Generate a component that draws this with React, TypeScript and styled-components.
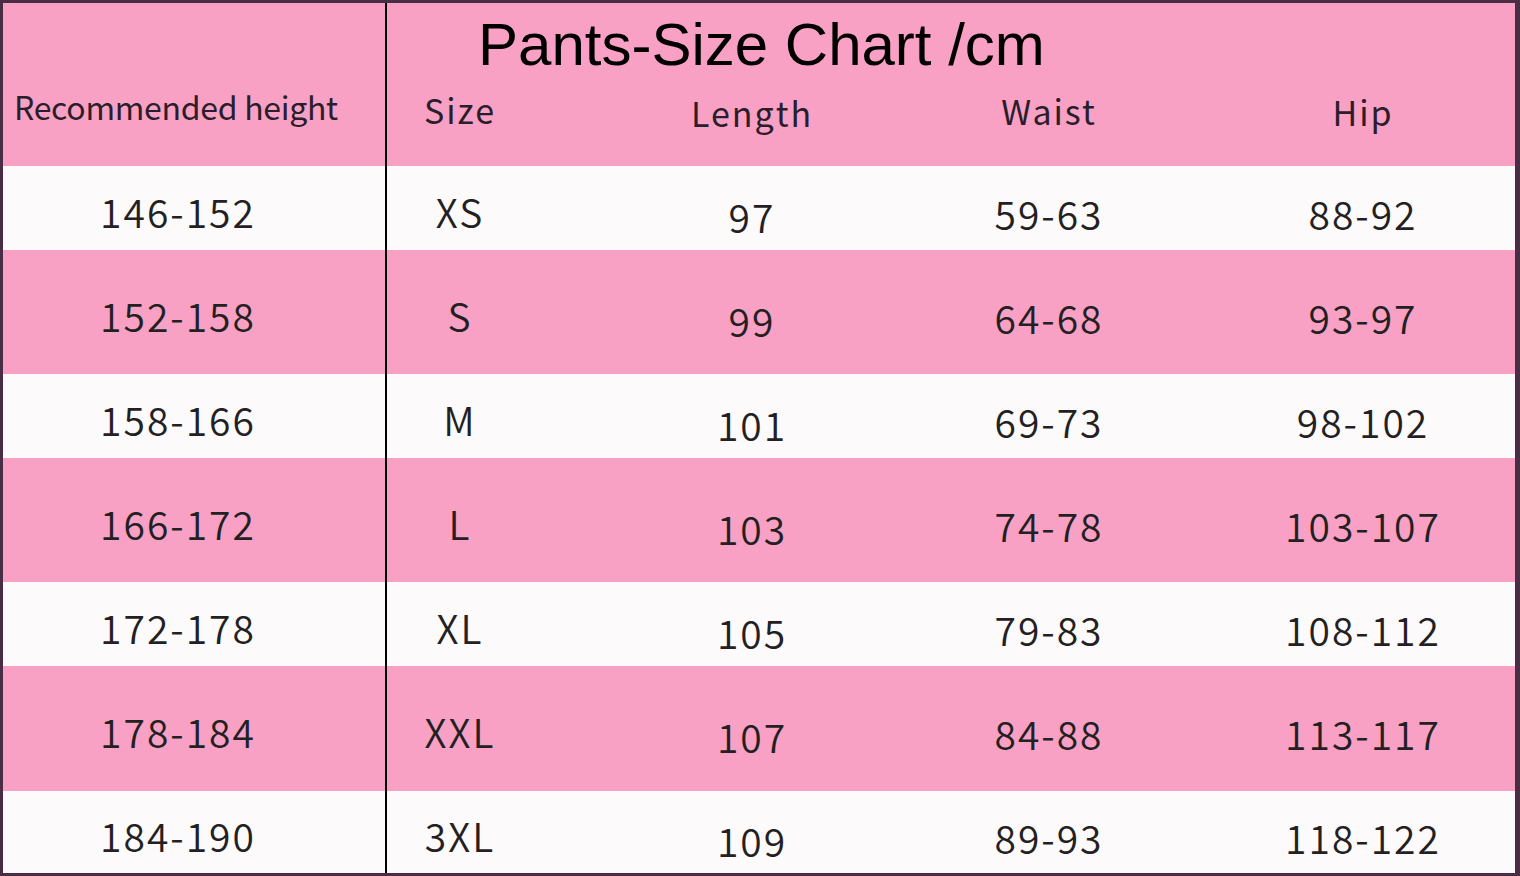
import React from "react";
import styled, { createGlobalStyle } from "styled-components";

const GlobalStyle = createGlobalStyle`
  html, body { margin: 0; padding: 0; background: #ffffff; }
  * { box-sizing: border-box; }
`;

const PINK = "#f8a1c5";
const WHITE = "#fdfafc";
const INK = "#231f22";

type Col = { width: string; pad: number; dy: number; labelDy: number };

const COLS: Col[] = [
  { width: "146px", pad: 0, dy: 0, labelDy: 0 },
  { width: "438px", pad: 0, dy: 5, labelDy: 3 },
  { width: "156px", pad: 0, dy: 2, labelDy: 1 },
  { width: "1fr", pad: 84, dy: 2, labelDy: 2 },
];

const rightTemplate = COLS.map((c) => c.width).join(" ");

const Frame = styled.div`
  width: 1520px;
  height: 876px;
  border: 3px solid #4a2c44;
  border-right-width: 5px;
  display: grid;
  grid-template-columns: 384px ${rightTemplate};
  grid-template-rows: 163px 84px 124px 84px 124px 84px 125px 82px;
  overflow: hidden;
`;

const HeightHead = styled.div`
  background: ${PINK};
  border-right: 2px solid #000;
  padding: 87px 0 0 11px;
  font-family: "Noto Sans CJK SC", "Noto Sans", sans-serif;
  font-size: 32px;
  line-height: 1;
  color: #2b1d29;
  letter-spacing: -0.3px;
  white-space: nowrap;
`;

const HeadRight = styled.div`
  grid-column: 2 / span 4;
  background: ${PINK};
  display: flex;
  flex-direction: column;
  padding-top: 12px;
`;

const Title = styled.h1`
  margin: 0 0 0 91px;
  font-family: "Liberation Sans", Arial, sans-serif;
  font-weight: 400;
  font-size: 60px;
  line-height: 60px;
  color: #000;
  white-space: nowrap;
`;

const LabelRow = styled.div`
  display: grid;
  grid-template-columns: ${rightTemplate};
  margin-top: 18px;
`;

const Label = styled.div<{ $pad: number; $dy: number }>`
  text-align: center;
  padding-left: ${(p) => p.$pad}px;
  padding-top: ${(p) => p.$dy}px;
  font-family: "Noto Sans CJK SC", "Noto Sans", sans-serif;
  font-size: 34px;
  line-height: 1;
  letter-spacing: 2px;
  color: #2b1d29;
`;

const Cell = styled.div<{ $pink: boolean; $pad?: number; $dy?: number; $divider?: boolean }>`
  background: ${(p) => (p.$pink ? PINK : WHITE)};
  display: flex;
  align-items: center;
  justify-content: center;
  padding-left: ${(p) => p.$pad ?? 0}px;
  padding-right: ${(p) => (p.$divider ? 32 : 0)}px;
  padding-top: ${(p) => 6 + 2 * (p.$dy ?? 0)}px;
  border-right: ${(p) => (p.$divider ? "2px solid #000" : "none")};
  font-family: "Noto Sans CJK SC", "Noto Sans", sans-serif;
  font-weight: 350;
  font-size: 39px;
  line-height: 1;
  letter-spacing: 2px;
  color: ${INK};
  white-space: nowrap;
`;

const HEADERS = ["Size", "Length", "Waist", "Hip"];

const ROWS: string[][] = [
  ["146-152", "XS", "97", "59-63", "88-92"],
  ["152-158", "S", "99", "64-68", "93-97"],
  ["158-166", "M", "101", "69-73", "98-102"],
  ["166-172", "L", "103", "74-78", "103-107"],
  ["172-178", "XL", "105", "79-83", "108-112"],
  ["178-184", "XXL", "107", "84-88", "113-117"],
  ["184-190", "3XL", "109", "89-93", "118-122"],
];

export default function App() {
  return (
    <>
      <GlobalStyle />
      <Frame>
        <HeightHead>Recommended height</HeightHead>
        <HeadRight>
          <Title>Pants-Size Chart /cm</Title>
          <LabelRow>
            {HEADERS.map((h, i) => (
              <Label key={h} $pad={COLS[i].pad} $dy={COLS[i].labelDy}>
                {h}
              </Label>
            ))}
          </LabelRow>
        </HeadRight>
        {ROWS.map((row, r) => {
          const pink = r % 2 === 1;
          return (
            <React.Fragment key={r}>
              <Cell $pink={pink} $divider>
                {row[0]}
              </Cell>
              {row.slice(1).map((v, i) => (
                <Cell key={i} $pink={pink} $pad={COLS[i].pad} $dy={COLS[i].dy}>
                  {v}
                </Cell>
              ))}
            </React.Fragment>
          );
        })}
      </Frame>
    </>
  );
}
